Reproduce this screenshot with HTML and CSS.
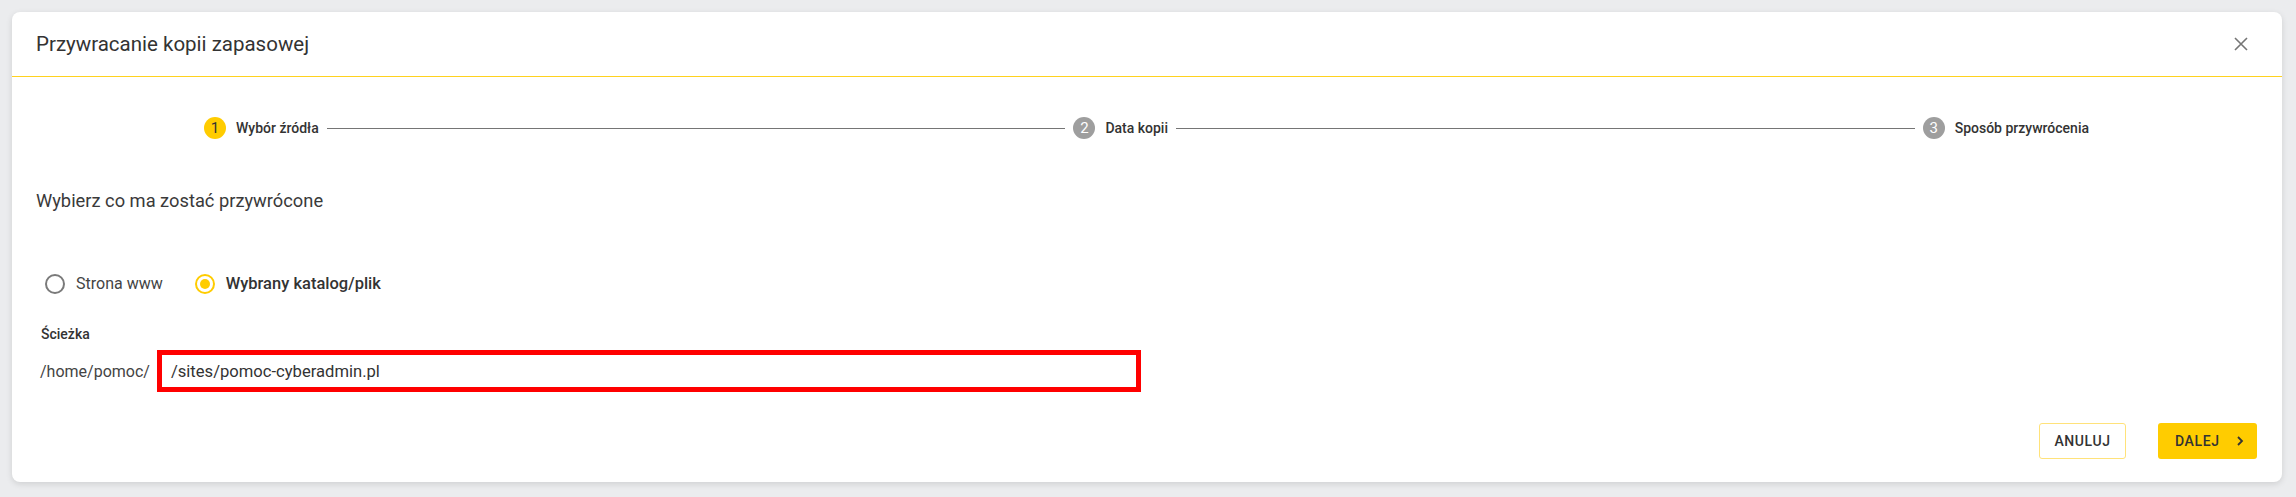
FILE: index.html
```html
<!DOCTYPE html>
<html lang="pl">
<head>
  <meta charset="UTF-8">
  <meta name="viewport" content="width=device-width, initial-scale=1.0">
  <title>Przywracanie kopii zapasowej</title>
  <link rel="stylesheet" href="styles.css">
</head>
<body>
  <div class="dialog">
    <div class="dialog-header">
      <h2>Przywracanie kopii zapasowej</h2>
      <button class="close" aria-label="Zamknij">
        <svg width="14" height="14" viewBox="0 0 14 14"><path d="M1 1L13 13M13 1L1 13" stroke="#757575" stroke-width="1.6" fill="none"/></svg>
      </button>
    </div>
    <div class="dialog-body">
      <div class="stepper">
        <div class="step active"><span class="num">1</span><span class="label">Wybór źródła</span></div>
        <div class="connector"></div>
        <div class="step"><span class="num">2</span><span class="label">Data kopii</span></div>
        <div class="connector"></div>
        <div class="step"><span class="num">3</span><span class="label">Sposób przywrócenia</span></div>
      </div>

      <p class="question">Wybierz co ma zostać przywrócone</p>

      <div class="radios">
        <label class="radio"><span class="ring"></span>Strona www</label>
        <label class="radio checked"><span class="ring"></span>Wybrany katalog/plik</label>
      </div>

      <div class="field-label">Ścieżka</div>
      <div class="path-row">
        <span class="prefix">/home/pomoc/</span>
        <div class="path-input">/sites/pomoc-cyberadmin.pl</div>
      </div>

      <div class="actions">
        <button class="btn btn-outline">ANULUJ</button>
        <button class="btn btn-primary">DALEJ
          <svg width="8" height="10" viewBox="0 0 8 10"><path d="M2 1L6 5L2 9" stroke="#333" stroke-width="1.8" fill="none"/></svg>
        </button>
      </div>
    </div>
  </div>
</body>
</html>
```

FILE: styles.css
```css
body {
  margin: 0;
  padding: 12px 14px 15px 12px;
  background: #ebecee;
  font-family: Roboto, "Liberation Sans", sans-serif;
  color: #333;
}
.dialog {
  background: #fff;
  border-radius: 8px;
  box-shadow: 0 2px 6px rgba(0, 0, 0, 0.12);
  height: 470px;
  box-sizing: border-box;
}
.dialog-header {
  height: 64px;
  display: flex;
  align-items: center;
  justify-content: space-between;
  padding: 0 34px 0 24px;
  border-bottom: 1px solid #ffd21f;
}
.dialog-header h2 {
  margin: 0;
  font-size: 20.5px;
  font-weight: 400;
  color: #333;
}
.close {
  border: none;
  background: none;
  padding: 0;
  display: flex;
  cursor: pointer;
}
.dialog-body {
  padding: 40px 25px 23px 24px;
}
.stepper {
  display: flex;
  align-items: center;
  padding: 0 168px 0 168px;
  height: 22px;
}
.step {
  display: flex;
  align-items: center;
}
.num {
  width: 22px;
  height: 22px;
  border-radius: 50%;
  background: #9e9e9e;
  color: #fff;
  font-size: 15px;
  display: flex;
  align-items: center;
  justify-content: center;
}
.step.active .num {
  background: #ffcc00;
  color: #333;
}
.label {
  margin-left: 10px;
  font-size: 14px;
  font-weight: 500;
  color: #333;
}
.connector {
  flex: 1;
  height: 1px;
  background: #757575;
  margin: 0 8px;
}
.question {
  margin: 50px 0 0 0;
  font-size: 18.3px;
  line-height: 24px;
  color: #3a3a3a;
}
.radios {
  display: flex;
  gap: 32px;
  margin-top: 59px;
  padding-left: 9px;
}
.radio {
  display: flex;
  align-items: center;
  gap: 11px;
  font-size: 16px;
  line-height: 24px;
  color: #444;
}
.radio.checked {
  font-size: 16.5px;
  font-weight: 500;
  color: #333;
}
.ring {
  width: 16px;
  height: 16px;
  border: 2px solid #7a7a7a;
  border-radius: 50%;
  display: flex;
  align-items: center;
  justify-content: center;
}
.radio.checked .ring {
  border-color: #ffcc00;
}
.radio.checked .ring::after {
  content: "";
  width: 10px;
  height: 10px;
  border-radius: 50%;
  background: #ffcc00;
}
.field-label {
  margin-top: 30px;
  padding-left: 5px;
  font-size: 14px;
  font-weight: 500;
  line-height: 17px;
  color: #333;
}
.path-row {
  display: flex;
  align-items: center;
  margin-top: 7px;
  padding-left: 4px;
}
.prefix {
  font-size: 16px;
  color: #444;
  margin-right: 7px;
}
.path-input {
  box-sizing: border-box;
  width: 984px;
  height: 42px;
  border: 5px solid #ff0000;
  display: flex;
  align-items: center;
  padding-left: 9px;
  font-size: 16.6px;
  color: #333;
}
.actions {
  display: flex;
  justify-content: flex-end;
  gap: 32px;
  margin-top: 31px;
}
.btn {
  height: 36px;
  border-radius: 3px;
  font-family: Roboto, "Liberation Sans", sans-serif;
  font-size: 14px;
  font-weight: 500;
  letter-spacing: 0.6px;
  color: #333;
  cursor: pointer;
  display: flex;
  align-items: center;
}
.btn-outline {
  width: 87px;
  justify-content: center;
  background: #fff;
  border: 1px solid #ffe27a;
}
.btn-primary {
  width: 99px;
  padding: 0 0 0 17px;
  gap: 16px;
  background: #ffcc00;
  border: none;
}
```
